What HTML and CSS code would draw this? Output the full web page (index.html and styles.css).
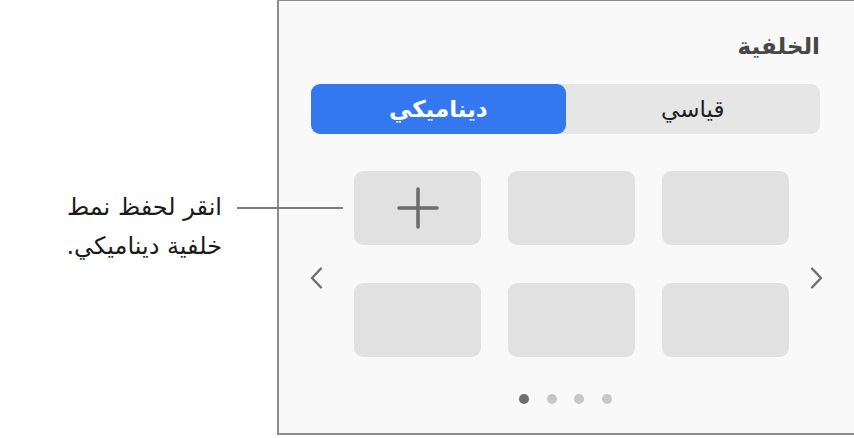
FILE: index.html
```html
<!DOCTYPE html>
<html lang="ar" dir="rtl">
<head>
    <meta charset="UTF-8">
    <meta name="viewport" content="width=device-width, initial-scale=1.0">
    <title>الخلفية</title>
    <link rel="stylesheet" href="styles.css">
</head>
<body>
    <div class="panel">
        <h2 class="panel-title">الخلفية</h2>
        <div class="segmented">
            <button class="segment">قياسي</button>
            <button class="segment active">ديناميكي</button>
        </div>
        <div class="carousel">
            <button class="nav" aria-label="التالي">
                <svg width="13" height="22" viewBox="0 0 13 22"><path d="M2 1.5 L11 11 L2 20.5" /></svg>
            </button>
            <div class="tiles">
                <div class="tile"></div>
                <div class="tile"></div>
                <div class="tile add">
                    <svg width="42" height="42" viewBox="0 0 42 42"><path d="M21 2 V40 M2 21 H40" /></svg>
                </div>
                <div class="tile"></div>
                <div class="tile"></div>
                <div class="tile"></div>
            </div>
            <button class="nav" aria-label="السابق">
                <svg width="13" height="22" viewBox="0 0 13 22"><path d="M11 1.5 L2 11 L11 20.5" /></svg>
            </button>
        </div>
        <div class="dots">
            <span class="dot current"></span>
            <span class="dot"></span>
            <span class="dot"></span>
            <span class="dot"></span>
        </div>
    </div>
    <div class="callout">
        <span class="callout-line"></span>
        <p class="callout-text">انقر لحفظ نمط<br>خلفية ديناميكي.</p>
    </div>
</body>
</html>
```

FILE: styles.css
```css
html, body {
    margin: 0;
    height: 100%;
}

body {
    display: flex;
    background-color: #fff;
    font-family: "DejaVu Sans", "Noto Sans", sans-serif;
    overflow: hidden;
}

.panel {
    flex-shrink: 0;
    width: 577px;
    height: 435px;
    box-sizing: border-box;
    padding: 0 34px 0 32px;
    background-color: #f9f9f9;
    border: 2px solid #8c8c8c;
    border-top-width: 1px;
    border-right: none;
}

.panel-title {
    margin: 29px 0 0;
    font-size: 23px;
    line-height: 32px;
    font-weight: 600;
    color: #474747;
}

.segmented {
    display: flex;
    height: 50px;
    margin-top: 22px;
    background-color: #e6e6e6;
    border-radius: 9px;
}

.segment {
    flex: 1;
    border: none;
    background: none;
    border-radius: 9px;
    font-family: inherit;
    font-size: 23px;
    color: #1f1f1f;
    cursor: pointer;
}

.segment.active {
    background-color: #3478f0;
    color: #fff;
    font-weight: bold;
}

.carousel {
    display: flex;
    align-items: flex-start;
    margin: 37px -3px 0 -1px;
}

.nav {
    display: flex;
    margin-top: 96px;
    padding: 0;
    border: none;
    background: none;
    cursor: pointer;
}

.nav svg path {
    fill: none;
    stroke: #6e6e6e;
    stroke-width: 2.4;
    stroke-linecap: round;
    stroke-linejoin: round;
}

.tiles {
    display: grid;
    grid-template-columns: repeat(3, 127px);
    grid-auto-rows: 74px;
    column-gap: 27px;
    row-gap: 38px;
    margin: 0 21px 0 31px;
}

.tile {
    background-color: #e1e1e1;
    border-radius: 9px;
}

.tile.add {
    display: flex;
    align-items: center;
    justify-content: center;
}

.tile.add path {
    stroke: #6b6b6b;
    stroke-width: 3.5;
    stroke-linecap: round;
}

.dots {
    display: flex;
    justify-content: center;
    direction: ltr;
    gap: 17.5px;
    margin-top: 37px;
}

.dot {
    width: 10px;
    height: 10px;
    border-radius: 50%;
    background-color: #c7c7c7;
}

.dot.current {
    background-color: #6e6e6e;
}

.callout {
    flex-shrink: 0;
    width: 277px;
    display: flex;
    align-items: flex-start;
    padding-top: 188px;
    box-sizing: border-box;
}

.callout-line {
    position: relative;
    z-index: 1;
    flex-shrink: 0;
    width: 106px;
    height: 2px;
    margin: 19px -66px 0 15px;
    background-color: #7d7d7d;
}

.callout-text {
    margin: 0;
    font-size: 24px;
    line-height: 39px;
    color: #1a1a1a;
}
```
